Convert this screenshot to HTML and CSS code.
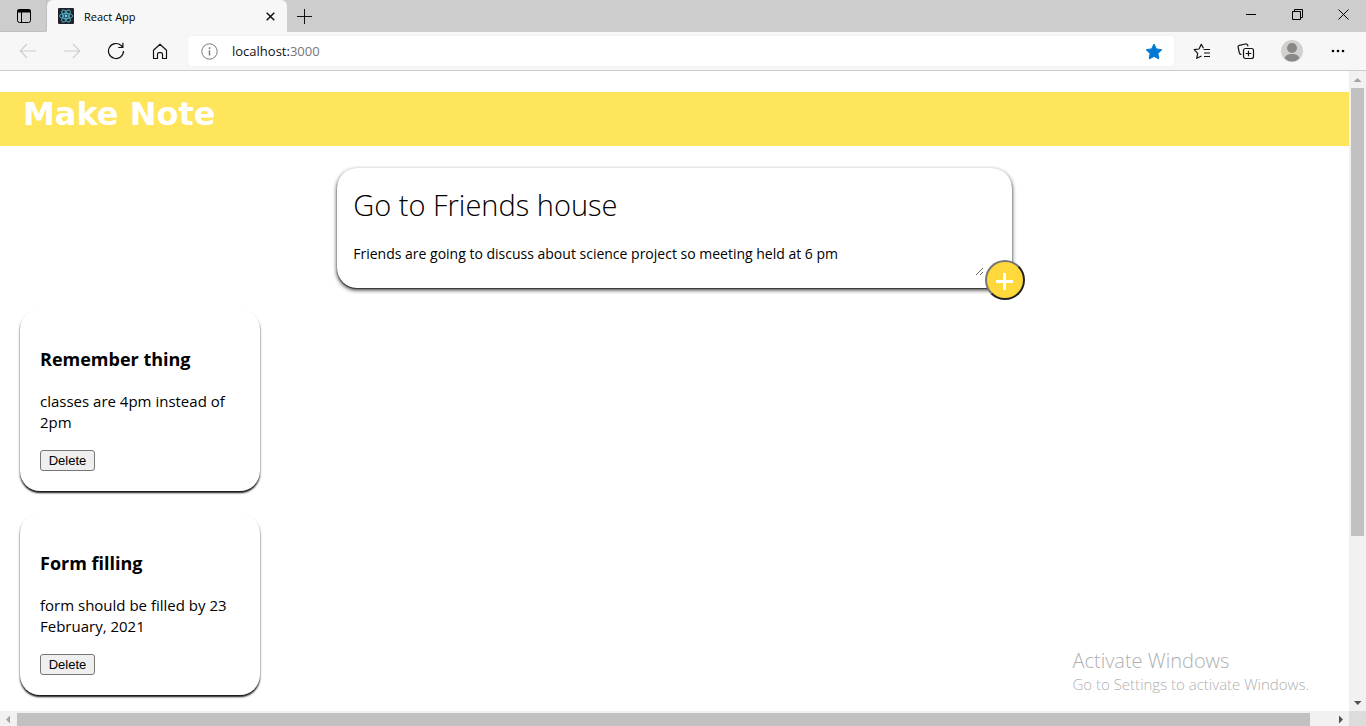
FILE: index.html
```html
<!DOCTYPE html>
<html lang="en">
<head>
<meta charset="utf-8">
<title>React App</title>
<link rel="stylesheet" href="styles.css">
</head>
<body>
<div class="titlebar">
  <button class="icon-btn tab-actions" aria-label="Tab actions"><svg width="16" height="16" viewBox="0 0 16 16" fill="none" stroke="#000"><rect x="1.5" y="1.5" width="13" height="13" rx="2"/><path d="M1.500 3h13" stroke-width="3"/><path d="M5.500 4v10"/></svg></button>
  <div class="tab">
    <svg width="16" height="16" viewBox="0 0 16 16"><rect width="16" height="16" rx="1" fill="#20232a"/><g fill="none" stroke="#4fb3cc" stroke-width=".9"><ellipse cx="8" cy="8" rx="6.7" ry="2.6"/><ellipse cx="8" cy="8" rx="6.7" ry="2.6" transform="rotate(60 8 8)"/><ellipse cx="8" cy="8" rx="6.7" ry="2.6" transform="rotate(120 8 8)"/></g><circle cx="8" cy="8" r="1.4" fill="#61dafb"/></svg>
    <span class="tab-title">React App</span>
    <button class="icon-btn" aria-label="Close tab"><svg width="9" height="9" viewBox="0 0 9 9" stroke="#111" stroke-width="1.5"><path d="M.7.7l7.6 7.6M8.3.7L.7 8.3"/></svg></button>
  </div>
  <button class="icon-btn new-tab" aria-label="New tab"><svg width="15" height="15" viewBox="0 0 15 15" stroke="#111" stroke-width="1"><path d="M7.5 0v15M0 7.5h15"/></svg></button>
  <div class="window-controls">
    <button class="icon-btn" aria-label="Minimize"><svg width="11" height="11" viewBox="0 0 11 11" stroke="#000"><path d="M0 5.5h10"/></svg></button>
    <button class="icon-btn" aria-label="Restore"><svg width="11" height="11" viewBox="0 0 11 11" fill="none" stroke="#000"><path d="M.5 2.5h8v8h-8zM2.500 2.500v-2h8v8h-2"/></svg></button>
    <button class="icon-btn" aria-label="Close"><svg width="11" height="11" viewBox="0 0 11 11" stroke="#000"><path d="M.5.5l10 10M10.500.5l-10 10"/></svg></button>
  </div>
</div>
<div class="toolbar">
  <button class="icon-btn nav" aria-label="Back"><svg width="18" height="16" viewBox="0 0 18 16" fill="none" stroke="#ccc" stroke-width="1.1"><path d="M17 8H1.500M8 1L1.200 8 8 15"/></svg></button>
  <button class="icon-btn nav" aria-label="Forward"><svg width="18" height="16" viewBox="0 0 18 16" fill="none" stroke="#ccc" stroke-width="1.1"><path d="M1 8h15.500M10 1l6.800 7-6.800 7"/></svg></button>
  <button class="icon-btn nav" aria-label="Refresh"><svg width="18" height="18" viewBox="0 0 18 18" fill="none" stroke="#111" stroke-width="1.2"><path d="M16.500 9a7.500 7.500 0 1 1-2.400-5.500L15.800 5.300M15.900.8v4.700h-4.700"/></svg></button>
  <button class="icon-btn nav" aria-label="Home"><svg width="16" height="17" viewBox="0 0 16 17" fill="none" stroke="#111" stroke-width="1.200"><path d="M1.500 7.200L8 1.200l6.500 6v8.300h-4v-4.300a1.500 1.500 0 0 0-1.500-1.500H7a1.500 1.500 0 0 0-1.500 1.500v4.300h-4z" stroke-linejoin="round"/></svg></button>
  <div class="address">
    <svg width="17" height="17" viewBox="0 0 17 17" fill="none" stroke="#777"><circle cx="8.500" cy="8.500" r="7.700"/><path d="M8.500 7.300v5.200M8.500 4.300v1.600" stroke-width="1.400"/></svg>
    <a class="url" href="#">localhost:<span class="port">3000</span></a>
    <button class="icon-btn" aria-label="Favorite"><svg width="18" height="17" viewBox="0 0 18 17"><path d="M9 1l2.400 4.900 5.400.8-3.900 3.800.9 5.400L9 13.400l-4.800 2.500.9-5.400L1.200 6.700l5.400-.8z" fill="#0078d4" stroke="#0078d4" stroke-linejoin="round"/></svg></button>
  </div>
  <div class="actions">
    <button class="icon-btn" aria-label="Favorites list"><svg width="18" height="17" viewBox="0 0 18 17" fill="none" stroke="#111" stroke-width="1.200"><path d="M10.500 5.300L8.300 1.300 6 6 1.200 6.700l3.500 3.600-1 5 4.800-2.300" stroke-linejoin="round"/><path d="M10.500 6.500H17M11 10h6M11 13.500h6"/></svg></button>
    <button class="icon-btn" aria-label="Collections"><svg width="18" height="17" viewBox="0 0 18 17" fill="none" stroke="#111" stroke-width="1.200"><rect x="6.500" y="5.500" width="10" height="10" rx="2"/><path d="M11.500 7.700v5.600M8.700 10.500h5.600M4.500 11.500c-1 0-1.800-.6-2.100-1.500L1.200 4.500c-.3-1 .3-1.900 1.300-2.200L8.300 1c1-.2 2 .3 2.400 1.300l.3 1"/></svg></button>
    <button class="icon-btn" aria-label="Profile"><svg width="22" height="22" viewBox="0 0 22 22"><circle cx="11" cy="11" r="11" fill="#d2d0ce"/><circle cx="11" cy="8" r="5" fill="#8a8886"/><path d="M3.500 18.500c1-3.500 4-4.500 7.500-4.500s6.500 1 7.500 4.500a11 11 0 0 1-15 0z" fill="#8a8886"/></svg></button>
    <button class="icon-btn" aria-label="More"><svg width="14" height="4" viewBox="0 0 14 4"><circle cx="2" cy="2" r="1.300"/><circle cx="7" cy="2" r="1.300"/><circle cx="12" cy="2" r="1.300"/></svg></button>
  </div>
</div>
<div class="viewport">
  <main class="page">
    <header class="header"><h1>Make Note</h1></header>
    <form class="note-form">
      <input class="note-title" type="text" aria-label="Title" value="Go to Friends house">
      <textarea class="note-text" aria-label="Note">Friends are going to discuss about science project so meeting held at 6 pm</textarea>
      <button class="add" type="button" aria-label="Add note"><svg width="17" height="17" viewBox="0 0 17 17" stroke="#fff" stroke-width="3"><path d="M8.500 0v17M0 8.500h17"/></svg></button>
    </form>
    <section class="notes">
      <article class="note"><h2>Remember thing</h2><p>classes are 4pm instead of 2pm</p><button class="delete">Delete</button></article>
      <article class="note"><h2>Form filling</h2><p>form should be filled by 23 February, 2021</p><button class="delete">Delete</button></article>
    </section>
  </main>
  <div class="scroll vertical">
    <svg class="arrow" viewBox="0 0 17 17"><path d="M4.500 11l4-4 4 4z" fill="#a3a3a3"/></svg>
    <div class="track"><div class="thumb"></div></div>
    <svg class="arrow" viewBox="0 0 17 17"><path d="M5 7h7.500l-3.750 4z" fill="#505050"/></svg>
  </div>
  <div class="scroll horizontal">
    <svg class="arrow" viewBox="0 0 17 17"><path d="M10 4.500v8l-4-4z" fill="#a3a3a3"/></svg>
    <div class="track"><div class="thumb"></div></div>
    <svg class="arrow" viewBox="0 0 17 17"><path d="M7 4.500v8l4-4z" fill="#505050"/></svg>
  </div>
  <div class="corner"></div>
</div>
<aside class="watermark"><div class="watermark-title">Activate Windows</div><div class="watermark-text">Go to Settings to activate Windows.</div></aside>
</body>
</html>
```
FILE: styles.css
```css
* { box-sizing: border-box; }
body { margin: 0; height: 100vh; display: flex; flex-direction: column; overflow: hidden; background: #fff; color: #000; font-family: "Open Sans", "Noto Sans", sans-serif; }
button { font-family: inherit; }
svg { display: block; flex: none; }
.icon-btn { display: flex; align-items: center; justify-content: center; border: 0; padding: 0; background: none; }
.titlebar { flex: none; height: 32px; display: flex; background: #cdcdcd; }
.tab-actions { width: 47px; padding-left: 1px; border-right: 1px solid #bebebe; border-bottom: 1px solid #bebebe; border-radius: 0 0 5px 0; }
.tab { width: 240px; display: flex; align-items: center; gap: 10px; padding: 0 12px 0 11px; border-radius: 6px 6px 0 0; background: #f7f7f7; font-size: 11px; }
.tab-title { flex: 1; }
.new-tab { width: 35px; }
.window-controls { margin-left: auto; display: grid; grid-template-columns: repeat(3, 46px); padding-bottom: 4px; }
.toolbar { flex: none; height: 39px; display: flex; align-items: center; background: #f7f7f7; border-bottom: 1px solid #ccc; padding-left: 6px; }
.nav { width: 44px; height: 32px; }
.address { flex: 1; height: 30px; margin-left: 6px; padding: 0 11px 0 13px; display: flex; align-items: center; gap: 14px; border-radius: 4px; background: #fff; font-size: 13px; box-shadow: 0 0 3px #eee; }
.url { flex: 1; color: #111; text-decoration: none; }
.port { color: #777; }
.actions { display: grid; grid-template-columns: 44px 44px 48px 44px; padding: 0 6px; }
.viewport { flex: 1; min-height: 0; display: grid; grid-template-columns: 1fr 17px; grid-template-rows: 1fr 15px; }
.page { min-height: 0; overflow: hidden; padding-top: 21px; }
.header { height: 54px; padding-left: 23px; background: #ffe55c; color: #fff; }
.header h1 { margin: 0; font: bold 32px/44px "DejaVu Sans", sans-serif; }
.note-form { position: relative; width: 50%; margin: 22px auto 0; padding: 14px 28px 12px 16px; display: flex; flex-direction: column; border-radius: 20px; box-shadow: 0 2px 4px #333, 0 1px 1px #444; }
.note-title, .note-text { border: 0; outline: 0; padding: 0; background: none; color: #000; font-family: inherit; }
.note-title { height: 44px; font-size: 29px; font-weight: 350; }
.note-text { height: 32px; margin-top: 18px; font-size: 14px; line-height: 20px; }
.add { position: absolute; right: -13px; bottom: -12px; width: 40px; height: 40px; padding: 3px 0 0; display: grid; place-items: center; border: 2px solid; border-color: #767676 #222 #222 #767676; border-radius: 50%; background: #ffd93b; }
.notes { display: flex; flex-direction: column; align-items: flex-start; gap: 22px; padding: 21px 20px; }
.note { width: 240px; padding: 38px 20px 20px; border-radius: 20px; box-shadow: 0 2px 2px #111; background: #fff; }
.note h2 { margin: 0 0 20px; font-size: 18px; line-height: 24px; }
.note p { margin: 0 0 17px; font-size: 15px; line-height: 21px; }
.delete { display: block; width: 55px; height: 21px; padding: 0; border: 1px solid #767676; border-radius: 3px; background: #efefef; font: 13px "Liberation Sans", sans-serif; }
.scroll { display: flex; background: #f1f1f1; }
.vertical { flex-direction: column; }
.track { flex: 1; display: flex; }
.vertical .track { padding: 0 2px; }
.horizontal .track { padding-top: 2px; }
.vertical .thumb { width: 100%; height: 74%; background: #c1c1c1; }
.horizontal .thumb { width: 98.3%; background: #c1c1c1; }
.arrow { width: 17px; height: 17px; }
.corner { background: #dcdcdc; }
.watermark { position: absolute; right: 57px; bottom: 32px; color: #b0b0b0; font-weight: 300; }
.watermark-title { font-size: 20px; line-height: 26px; }
.watermark-text { font-size: 15px; line-height: 20px; }
```
